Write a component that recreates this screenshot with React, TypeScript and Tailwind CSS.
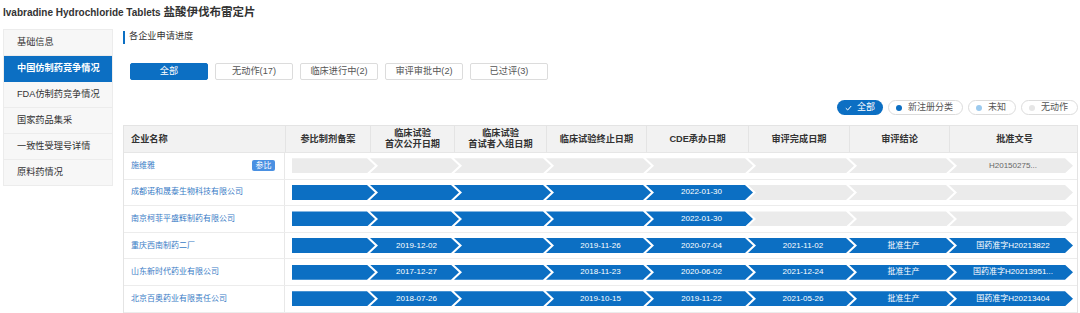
import React from "react";

type Seg = { on: boolean; text?: string };
type Row = { name: string; ref?: boolean; segs: Seg[]; grayText?: string };

const SEG_FIRST =
  "ml-[7px] mr-[-5px] [clip-path:polygon(0_0,calc(100%_-_8px)_0,100%_50%,calc(100%_-_8px)_100%,0_100%)]";
const SEG_MID =
  "ml-[0px] mr-[-5px] pl-[4px] [clip-path:polygon(0_0,calc(100%_-_8px)_0,100%_50%,calc(100%_-_8px)_100%,0_100%,8px_50%)]";
const SEG_LAST =
  "ml-[0px] mr-[6px] pl-[4px] [clip-path:polygon(0_0,calc(100%_-_8px)_0,100%_50%,calc(100%_-_8px)_100%,0_100%,8px_50%)]";

const b = (text?: string): Seg => ({ on: true, text });
const g = (text?: string): Seg => ({ on: false, text });

const rows: Row[] = [
  { name: "施维雅", ref: true, segs: [g(), g(), g(), g(), g(), g(), g(), g("H20150275...")] },
  { name: "成都诺和晟泰生物科技有限公司", segs: [b(), b(), b(), b(), b("2022-01-30"), g(), g(), g()] },
  { name: "南京柯菲平盛辉制药有限公司", segs: [b(), b(), b(), b(), b("2022-01-30"), g(), g(), g()] },
  {
    name: "重庆西南制药二厂",
    segs: [b(), b("2019-12-02"), b(), b("2019-11-26"), b("2020-07-04"), b("2021-11-02"), b("批准生产"), b("国药准字H20213822")],
  },
  {
    name: "山东新时代药业有限公司",
    segs: [b(), b("2017-12-27"), b(), b("2018-11-23"), b("2020-06-02"), b("2021-12-24"), b("批准生产"), b("国药准字H20213951...")],
  },
  {
    name: "北京百奥药业有限责任公司",
    segs: [b(), b("2018-07-26"), b(), b("2019-10-15"), b("2019-11-22"), b("2021-05-26"), b("批准生产"), b("国药准字H20213404")],
  },
];

const sideItems = ["基础信息", "中国仿制药竞争情况", "FDA仿制药竞争情况", "国家药品集采", "一致性受理号详情", "原料药情况"];
const tabs = ["全部", "无动作(17)", "临床进行中(2)", "审评审批中(2)", "已过评(3)"];

const GRID = "grid grid-cols-[161px_85px_84px_92px_100px_102px_101px_100px_130px]";

function Header() {
  const heads: React.ReactNode[] = [
    "参比制剂备案",
    <>临床试验<br />首次公开日期</>,
    <>临床试验<br />首试者入组日期</>,
    "临床试验终止日期",
    "CDE承办日期",
    "审评完成日期",
    "审评结论",
    "批准文号",
  ];
  return (
    <div className={`${GRID} h-[27px] bg-[#f2f2f2] border-b border-[#e6e6e6] text-[9.2px] leading-[11px] font-bold text-[#333]`}>
      <div className="flex items-center pl-[7px]">企业名称</div>
      {heads.map((h, i) => (
        <div key={i} className="flex items-center justify-center text-center border-l border-[#e4e4e4]">
          {h}
        </div>
      ))}
    </div>
  );
}

function BodyRow({ row }: { row: Row }) {
  return (
    <div className={`${GRID} h-[26.6px] border-b border-[#ececec]`}>
      <div className="flex items-center justify-between pl-[7px] pr-[9px] border-r border-[#e8e8e8]">
        <span className="text-[8px] text-[#3a7cc6]">{row.name}</span>
        {row.ref && (
          <span className="h-[11px] w-[23px] rounded-[2px] bg-[#4a90e2] text-white text-[8px] leading-[11px] text-center">参比</span>
        )}
      </div>
      {row.segs.map((s, i) => {
        const shape = i === 0 ? SEG_FIRST : i === row.segs.length - 1 ? SEG_LAST : SEG_MID;
        return (
          <div key={i} className="flex items-center min-w-0">
            <div
              className={`${shape} h-[15px] flex-1 flex items-center justify-center whitespace-nowrap overflow-hidden text-[8px] ${
                s.on ? "bg-[#0c6fc3] text-white" : "bg-[#ebebeb] text-[#666]"
              }`}
            >
              {s.text}
            </div>
          </div>
        );
      })}
    </div>
  );
}

export default function App() {
  return (
    <div className="w-[1080px] h-[313px] overflow-hidden bg-white font-['Liberation_Sans','Noto_Sans_CJK_SC',sans-serif] text-[#333]">
      <div className="h-[29px] pl-[3px] pt-[4px] leading-[13px] font-bold text-[#333]">
        <span className="text-[10px]">Ivabradine Hydrochloride Tablets </span>
        <span className="text-[11.5px]">盐酸伊伐布雷定片</span>
      </div>
      <div className="flex">
        <div className="ml-[3px] w-[110px] self-start bg-[#f7f7f7] border border-[#ececec] border-b-0">
          {sideItems.map((s, i) => (
            <div
              key={s}
              className={`h-[26px] flex items-center pl-[13px] text-[9.2px] border-b ${
                i === 1 ? "bg-[#0c6fc3] text-white font-bold border-[#0c6fc3]" : "text-[#333] border-[#ececec]"
              }`}
            >
              {s}
            </div>
          ))}
        </div>
        <div className="ml-[10px] w-[955px]">
          <div className="mt-[1px] h-[14px] flex items-center">
            <div className="w-[2px] h-[13px] bg-[#0c6fc3]" />
            <span className="ml-[4px] text-[9.2px] text-[#333]">各企业申请进度</span>
          </div>
          <div className="mt-[19px] ml-[7px] flex gap-[7px]">
            {tabs.map((t, i) => (
              <div
                key={t}
                className={`w-[78px] h-[17px] rounded-[2px] flex items-center justify-center text-[9.2px] border ${
                  i === 0 ? "bg-[#0c6fc3] border-[#0c6fc3] text-white" : "bg-white border-[#dcdcdc] text-[#555]"
                }`}
              >
                {t}
              </div>
            ))}
          </div>
          <div className="mt-[20px] h-[15px] flex justify-end gap-[5px] text-[9px]">
            <div className="h-[15px] w-[46px] rounded-full bg-[#0c6fc3] text-white flex items-center justify-center gap-[5px]">
              <svg width="7" height="6" viewBox="0 0 7 6" fill="none">
                <path d="M0.8 3.2 L2.7 5 L6.2 1" stroke="white" strokeWidth="1" />
              </svg>
              <span>全部</span>
            </div>
            <div className="h-[15px] w-[75px] rounded-full border border-[#dcdcdc] flex items-center pl-[7px] gap-[6px] text-[#555]">
              <span className="w-[6px] h-[6px] rounded-full bg-[#0c6fc3]" />
              <span>新注册分类</span>
            </div>
            <div className="h-[15px] w-[48px] rounded-full border border-[#dcdcdc] flex items-center pl-[7px] gap-[6px] text-[#555]">
              <span className="w-[6px] h-[6px] rounded-full bg-[#9ccaee]" />
              <span>未知</span>
            </div>
            <div className="h-[15px] w-[57px] rounded-full border border-[#dcdcdc] flex items-center pl-[7px] gap-[6px] text-[#555]">
              <span className="w-[6px] h-[6px] rounded-full bg-[#e6e6e6]" />
              <span>无动作</span>
            </div>
          </div>
          <div className="mt-[10px] border-t border-l border-r border-[#e4e4e4]">
            <Header />
            {rows.map((r) => (
              <BodyRow key={r.name} row={r} />
            ))}
            <div className={`${GRID} h-[20px]`}>
              <div className="border-r border-[#e8e8e8]" />
            </div>
          </div>
        </div>
      </div>
    </div>
  );
}
